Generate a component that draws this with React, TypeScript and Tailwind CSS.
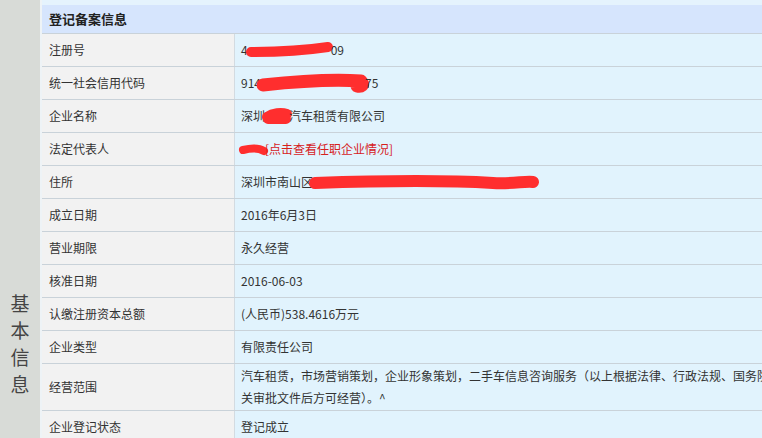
import React from "react";

const FONT = { fontFamily: '"Microsoft YaHei", "Noto Sans CJK SC", "Noto Sans", sans-serif' };

function Blob({ w, h = 14, d, sw = 10 }: { w: number; h?: number; d: string; sw?: number }) {
  return (
    <svg width={w} height={h} viewBox={`0 0 ${w} ${h}`} className="inline-block align-middle shrink-0" style={{ overflow: "visible" }}>
      <path d={d} stroke="#ff2e2e" strokeWidth={sw} strokeLinecap="round" strokeLinejoin="round" fill="none" />
    </svg>
  );
}

type Row = { label: string; value: React.ReactNode; tall?: boolean };

const rows: Row[] = [
  {
    label: "注册号",
    value: (
      <span className="flex items-center">
        <span>4</span>
        <Blob w={83} d="M3 9 C 30 9, 60 7, 80 4" sw={10} />
        <span>09</span>
      </span>
    ),
  },
  {
    label: "统一社会信用代码",
    value: (
      <span className="flex items-center">
        <span>914</span>
        <Blob w={104} h={16} d="M2 10 C 30 7, 70 4, 100 6 C 104 10, 100 12, 96 11" sw={13} />
        <span>75</span>
      </span>
    ),
  },
  {
    label: "企业名称",
    value: (
      <span className="flex items-center">
        <span>深圳</span>
        <Blob w={24} d="M2 8 C 8 4, 16 3, 22 5 M3 10 C 10 10, 16 10, 21 10" sw={10} />
        <span>汽车租赁有限公司</span>
      </span>
    ),
  },
  {
    label: "法定代表人",
    value: (
      <span className="flex items-center">
        <Blob w={24} h={10} d="M2 6 C 10 4, 18 4, 23 7" sw={8} />
        <span className="text-[#d6211d]">[点击查看任职企业情况]</span>
      </span>
    ),
  },
  {
    label: "住所",
    value: (
      <span className="flex items-center">
        <span>深圳市南山区</span>
        <Blob w={222} h={14} d="M2 8 C 60 6, 130 5, 180 8 C 200 9, 212 6, 220 7" sw={12} />
      </span>
    ),
  },
  { label: "成立日期", value: "2016年6月3日" },
  { label: "营业期限", value: "永久经营" },
  { label: "核准日期", value: "2016-06-03" },
  { label: "认缴注册资本总额", value: "(人民币)538.4616万元" },
  { label: "企业类型", value: "有限责任公司" },
  {
    label: "经营范围",
    tall: true,
    value: (
      <span className="whitespace-nowrap leading-[22px]">
        汽车租赁，市场营销策划，企业形象策划，二手车信息咨询服务（以上根据法律、行政法规、国务院决定等规定需要审批的，依法取得相
        <br />
        关审批文件后方可经营）。^
      </span>
    ),
  },
  { label: "企业登记状态", value: "登记成立" },
];

export default function App() {
  return (
    <div className="w-[762px] h-[438px] overflow-hidden flex bg-[#eef3f6] text-[12px] text-[#333]" style={FONT}>
      <div className="w-[40px] shrink-0 bg-[#d8dbd7] flex flex-col items-center pt-[289px] text-[19px] leading-[27px] text-[#444]">
        <span>基</span>
        <span>本</span>
        <span>信</span>
        <span>息</span>
      </div>
      <div className="w-[2px] shrink-0 bg-[#eef3f6]" />
      <div className="w-[1000px] shrink-0 bg-[#e5f3fd] pt-[5px]">
        <div className="h-[28px] bg-[#d6e5fd] pl-[7px] flex items-center font-bold text-[13px] text-[#222]">
          登记备案信息
        </div>
        {rows.map((r) => (
          <div
            key={r.label}
            className={`flex border-t border-[#c9d2d9] ${r.tall ? "h-[47px]" : "h-[33px]"}`}
          >
            <div className="w-[193px] shrink-0 bg-[#f2f2f2] border-r border-[#d3dbe1] pl-[7px] flex items-center">
              {r.label}
            </div>
            <div className="flex-1 bg-[#e1f3fd] pl-[6px] flex items-center">{r.value}</div>
          </div>
        ))}
      </div>
    </div>
  );
}
